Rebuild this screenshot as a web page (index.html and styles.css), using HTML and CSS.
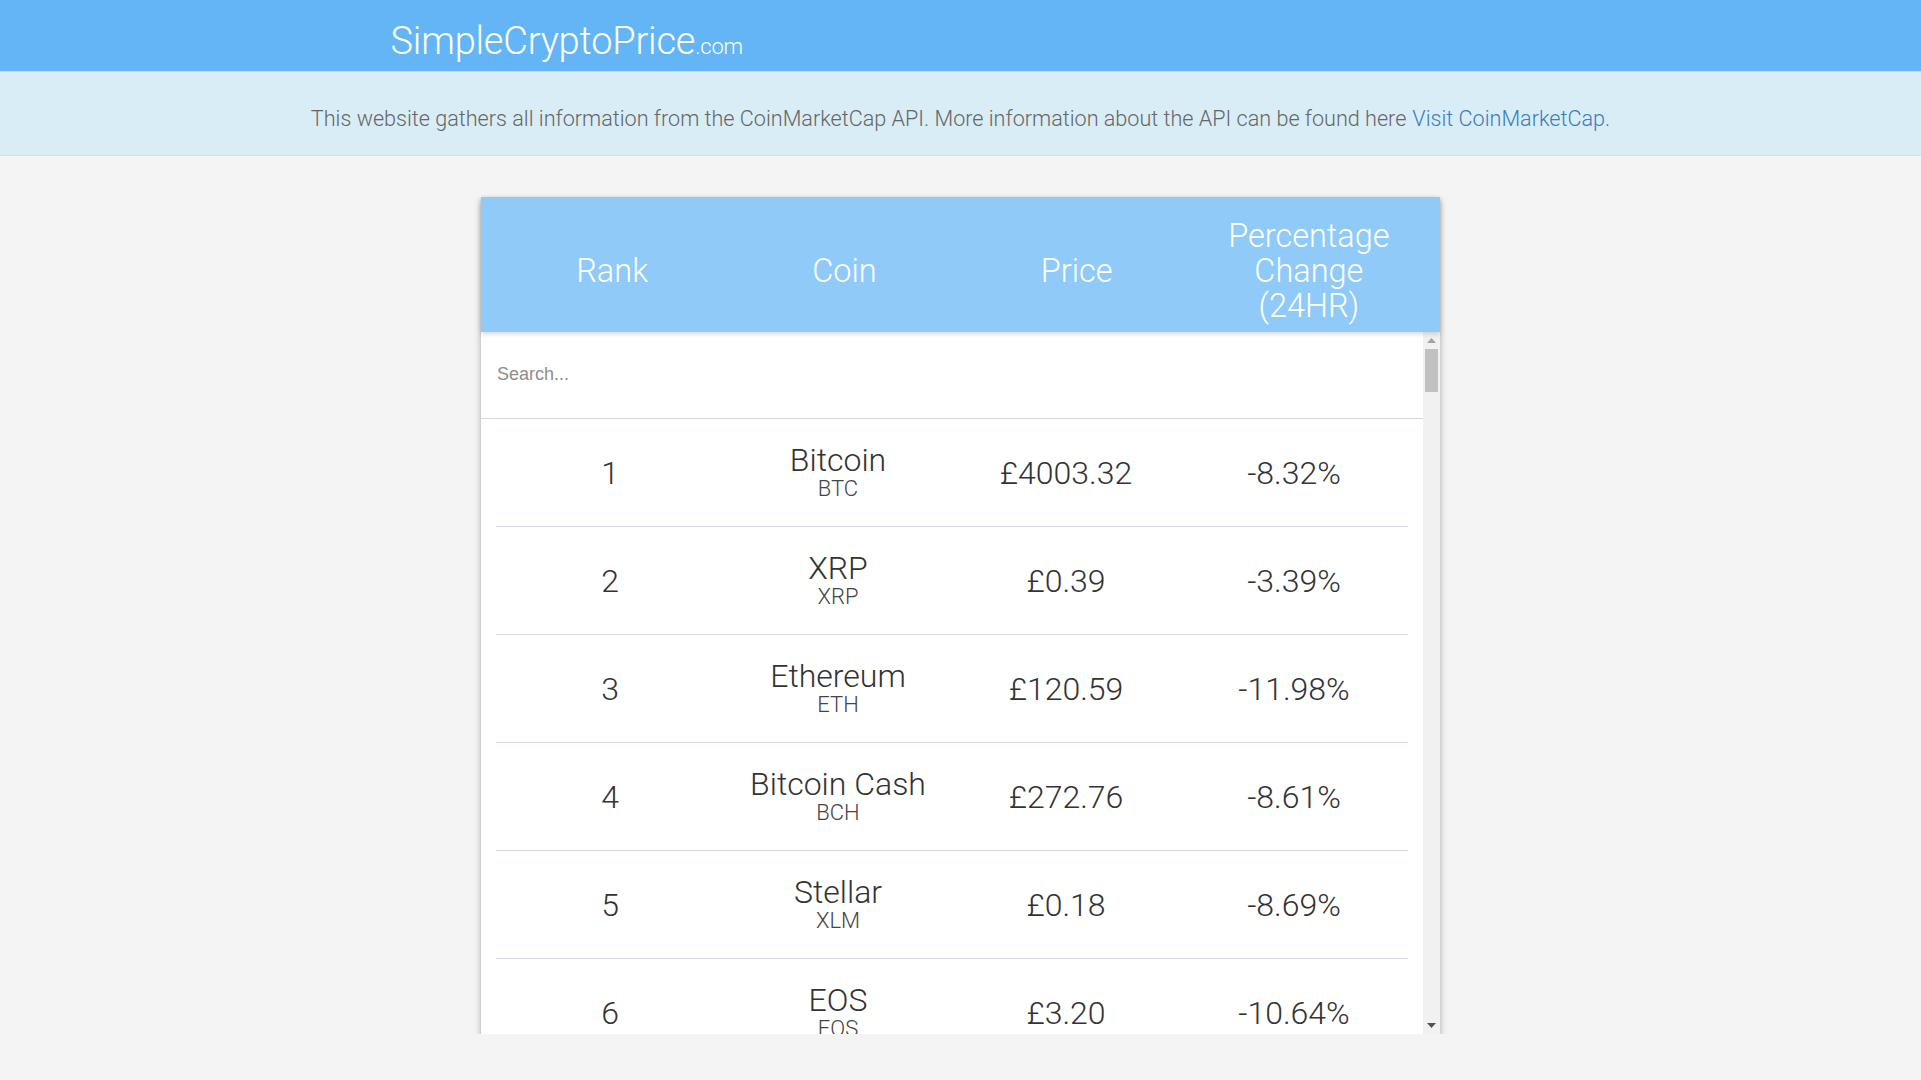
FILE: index.html
```html
<!DOCTYPE html>
<html lang="en">
<head>
<meta charset="utf-8">
<title>SimpleCryptoPrice.com</title>
<link rel="stylesheet" href="styles.css">
</head>
<body>
<header class="topbar">
  <div class="container">
    <a class="brand" href="#">SimpleCryptoPrice<span class="brand-tld">.com</span></a>
  </div>
</header>
<div class="info">
  This website gathers all information from the CoinMarketCap API. More information about the API can be found here <a href="#" class="info-link">Visit CoinMarketCap</a>.
</div>
<main class="main">
  <section class="card">
    <div class="thead">
      <div class="th">Rank</div>
      <div class="th">Coin</div>
      <div class="th">Price</div>
      <div class="th">Percentage<br>Change<br>(24HR)</div>
    </div>
    <div class="tbody-wrap">
      <div class="tbody">
        <div class="search-row">
          <input class="search" type="text" placeholder="Search...">
        </div>
        <div class="row">
          <div class="cell">1</div>
          <div class="cell coin"><span class="coin-name">Bitcoin</span><span class="coin-sym">BTC</span></div>
          <div class="cell">£4003.32</div>
          <div class="cell">-8.32%</div>
        </div>
        <div class="row">
          <div class="cell">2</div>
          <div class="cell coin"><span class="coin-name">XRP</span><span class="coin-sym">XRP</span></div>
          <div class="cell">£0.39</div>
          <div class="cell">-3.39%</div>
        </div>
        <div class="row">
          <div class="cell">3</div>
          <div class="cell coin"><span class="coin-name">Ethereum</span><span class="coin-sym">ETH</span></div>
          <div class="cell">£120.59</div>
          <div class="cell">-11.98%</div>
        </div>
        <div class="row">
          <div class="cell">4</div>
          <div class="cell coin"><span class="coin-name">Bitcoin Cash</span><span class="coin-sym">BCH</span></div>
          <div class="cell">£272.76</div>
          <div class="cell">-8.61%</div>
        </div>
        <div class="row">
          <div class="cell">5</div>
          <div class="cell coin"><span class="coin-name">Stellar</span><span class="coin-sym">XLM</span></div>
          <div class="cell">£0.18</div>
          <div class="cell">-8.69%</div>
        </div>
        <div class="row">
          <div class="cell">6</div>
          <div class="cell coin"><span class="coin-name">EOS</span><span class="coin-sym">EOS</span></div>
          <div class="cell">£3.20</div>
          <div class="cell">-10.64%</div>
        </div>
      </div>
      <div class="scrollbar" aria-hidden="true">
        <div class="sb-btn"><svg width="9" height="5" viewBox="0 0 9 5"><path d="M0 5 L4.5 0 L9 5 Z" fill="#a3a3a3"/></svg></div>
        <div class="sb-track"><div class="sb-thumb"></div></div>
        <div class="sb-btn"><svg width="9" height="5" viewBox="0 0 9 5"><path d="M0 0 L9 0 L4.5 5 Z" fill="#505050"/></svg></div>
      </div>
    </div>
  </section>
</main>
</body>
</html>
```

FILE: styles.css
```css
* { box-sizing: border-box; }

html, body {
  margin: 0;
  padding: 0;
}

body {
  background: #f4f4f4;
  font-family: Roboto, "Liberation Sans", sans-serif;
  font-weight: 300;
  color: #333;
}

.topbar {
  background: #64b5f6;
  height: 71px;
}

.container {
  width: 1170px;
  margin: 0 auto;
  padding: 0 15px;
}

.brand {
  display: inline-block;
  color: #fff;
  text-decoration: none;
  font-size: 38px;
  font-weight: 300;
  line-height: 38px;
  padding-top: 22px;
  letter-spacing: -0.2px;
}

.brand-tld {
  font-size: 22px;
}

.info {
  background: #d9edf7;
  border-top: 1px solid #bce8f1;
  border-bottom: 1px solid #bce8f1;
  height: 85px;
  display: flex;
  align-items: center;
  justify-content: center;
  font-size: 21.6px;
  color: #666;
  padding-top: 10px;
}

.info-link {
  color: #3b7bbf;
  text-decoration: none;
  margin-left: 6px;
}

.main {
  padding-top: 41px;
  display: flex;
  justify-content: center;
}

.card {
  width: 959px;
  background: #fff;
  box-shadow: 0 4px 8px rgba(0, 0, 0, 0.2), 0 2px 4px rgba(0, 0, 0, 0.14);
}

.thead {
  position: relative;
  z-index: 1;
  background: #90caf9;
  height: 135px;
  padding: 22px 15px 8px;
  display: grid;
  grid-template-columns: repeat(4, 1fr);
  align-items: center;
  box-shadow: 0 2px 5px rgba(0, 0, 0, 0.16);
}

.th {
  color: #fff;
  text-align: center;
  font-size: 32.5px;
  font-weight: 300;
  line-height: 35px;
}

.tbody-wrap {
  display: flex;
  height: 702px;
}

.tbody {
  flex: 1;
  overflow: hidden;
}

.search-row {
  height: 87px;
  border-bottom: 1px solid #d4dae2;
  display: flex;
  align-items: center;
}

.search {
  width: 100%;
  border: none;
  outline: none;
  background: transparent;
  padding: 0 16px;
  font-family: "Liberation Sans", Arial, sans-serif;
  font-size: 18px;
  color: #333;
  margin-bottom: 2px;
}

.search::placeholder {
  color: #8e8e8e;
}

.row {
  margin: 0 15px;
  height: 108px;
  border-bottom: 1px solid #d4dae2;
  display: grid;
  grid-template-columns: repeat(4, 1fr);
  align-items: center;
}

.cell {
  text-align: center;
  font-size: 32px;
  font-weight: 300;
  color: #333;
  line-height: 36px;
}

.coin {
  display: flex;
  flex-direction: column;
  align-items: center;
}

.coin-name {
  font-size: 32px;
  line-height: 31px;
}

.coin-sym {
  font-size: 22px;
  line-height: 25px;
  color: #444;
}

.scrollbar {
  width: 17px;
  background: #f1f1f1;
  display: flex;
  flex-direction: column;
}

.sb-btn {
  height: 17px;
  display: flex;
  align-items: center;
  justify-content: center;
}

.sb-track {
  flex: 1;
  padding: 0 2px;
}

.sb-thumb {
  height: 43px;
  background: #c1c1c1;
}
```
